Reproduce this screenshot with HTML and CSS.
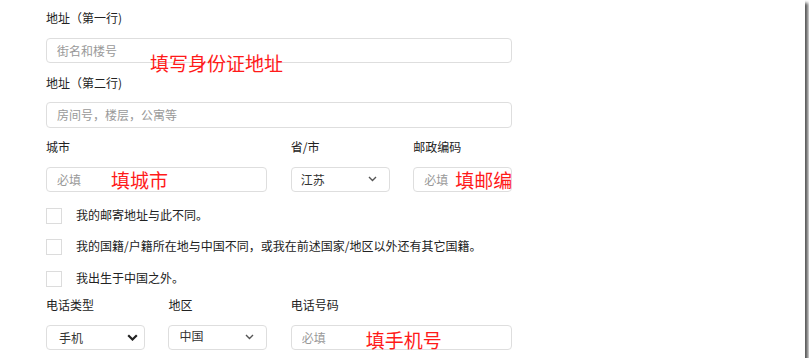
FILE: index.html
```html
<!DOCTYPE html>
<html lang="zh-CN">
<head>
    <meta charset="UTF-8">
    <meta name="viewport" content="width=device-width, initial-scale=1.0">
    <title>地址信息</title>
    <link rel="stylesheet" href="styles.css">
</head>
<body>
    <div class="frame">
        <form class="form">
            <div class="field">
                <label class="label">地址（第一行)</label>
                <div class="control">
                    <input class="input" type="text" placeholder="街名和楼号">
                    <span class="note note-addr">填写身份证地址</span>
                </div>
            </div>

            <div class="field">
                <label class="label">地址（第二行)</label>
                <div class="control">
                    <input class="input" type="text" placeholder="房间号，楼层，公寓等">
                </div>
            </div>

            <div class="field-grid">
                <div class="cell wide">
                    <label class="label">城市</label>
                    <div class="control">
                        <input class="input" type="text" placeholder="必填">
                        <span class="note note-city">填城市</span>
                    </div>
                </div>
                <div class="cell">
                    <label class="label">省/市</label>
                    <div class="select">
                        <span class="select-text">江苏</span>
                        <svg class="chevron" width="9" height="6" viewBox="0 0 9 6"><polyline points="1,1 4.5,4.5 8,1" fill="none" stroke="#555" stroke-width="1.4"/></svg>
                    </div>
                </div>
                <div class="cell">
                    <label class="label">邮政编码</label>
                    <div class="control">
                        <input class="input" type="text" placeholder="必填">
                        <span class="note note-zip">填邮编</span>
                    </div>
                </div>
            </div>

            <div class="checks">
                <div class="check-row">
                    <span class="checkbox"></span>
                    <span class="check-text">我的邮寄地址与此不同。</span>
                </div>
                <div class="check-row">
                    <span class="checkbox"></span>
                    <span class="check-text">我的国籍/户籍所在地与中国不同，或我在前述国家/地区以外还有其它国籍。</span>
                </div>
                <div class="check-row">
                    <span class="checkbox"></span>
                    <span class="check-text">我出生于中国之外。</span>
                </div>
            </div>

            <div class="field-grid phone-row">
                <div class="cell">
                    <label class="label">电话类型</label>
                    <div class="select">
                        <span class="select-text">手机</span>
                        <svg class="chevron chevron-bold" width="11" height="7" viewBox="0 0 11 7"><polyline points="1.2,1.2 5.5,5.5 9.8,1.2" fill="none" stroke="#222" stroke-width="2.2"/></svg>
                    </div>
                </div>
                <div class="cell">
                    <label class="label">地区</label>
                    <div class="select">
                        <span class="select-text select-text-up">中国</span>
                        <svg class="chevron" width="9" height="6" viewBox="0 0 9 6"><polyline points="1,1 4.5,4.5 8,1" fill="none" stroke="#555" stroke-width="1.4"/></svg>
                    </div>
                </div>
                <div class="cell wide">
                    <label class="label">电话号码</label>
                    <div class="control">
                        <input class="input" type="text" placeholder="必填">
                        <span class="note note-phone">填手机号</span>
                    </div>
                </div>
            </div>
        </form>
    </div>
</body>
</html>
```

FILE: styles.css
```css
body {
    margin: 0;
    background: #fff;
    font-family: "Noto Sans CJK SC", "Noto Sans", sans-serif;
    color: #222;
}

.frame {
    width: 805px;
    height: 358px;
    background: #fff;
    box-shadow: 3px 3px 3px rgba(0, 0, 0, 0.65);
    overflow: visible;
}

.form {
    width: 466px;
    padding: 8px 0 0 46px;
}

.field {
    margin-bottom: 9.5px;
}

.label {
    display: block;
    height: 20px;
    line-height: 20px;
    font-size: 12px;
    color: #222;
    margin-bottom: 9.5px;
    white-space: nowrap;
}

.control {
    position: relative;
}

.input {
    display: block;
    box-sizing: border-box;
    width: 100%;
    height: 25.5px;
    margin: 0;
    padding: 0 10px;
    border: 1px solid #dedede;
    border-radius: 4px;
    background: #fff;
    font-family: inherit;
    font-size: 12px;
    color: #333;
    outline: none;
}

.input::placeholder {
    color: #999;
}

.note {
    position: absolute;
    font-size: 19px;
    line-height: 20px;
    color: #ff1a1a;
    white-space: nowrap;
    pointer-events: none;
}

.note-addr { left: 104px; top: 15px; }
.note-city { left: 65px; top: 3px; }
.note-zip { left: 42px; top: 3px; }
.note-phone { left: 75px; top: 5px; }

.field-grid {
    display: grid;
    grid-template-columns: repeat(4, 1fr);
    column-gap: 23.5px;
}

.wide {
    grid-column: span 2;
}

.select {
    box-sizing: border-box;
    height: 25.5px;
    display: flex;
    align-items: center;
    justify-content: space-between;
    padding: 0 12px 0 9px;
    border: 1px solid #dedede;
    border-radius: 4px;
    background: #fff;
}

.select-text {
    font-size: 12px;
    color: #333;
}

.select-text-up {
    margin-top: -4px;
}

.phone-row .cell:first-child .select {
    padding-left: 12px;
    padding-right: 6px;
}

.phone-row .cell:nth-child(2) .select {
    padding-left: 10px;
}

.checks {
    margin-top: 8px;
}

.check-row {
    display: flex;
    align-items: center;
    height: 31.5px;
}

.checkbox {
    box-sizing: border-box;
    width: 16px;
    height: 16px;
    border: 1px solid #dcdcdc;
    background: #fff;
    flex-shrink: 0;
}

.check-text {
    margin-left: 14px;
    margin-top: -3px;
    font-size: 12px;
    color: #222;
    white-space: nowrap;
}

.phone-row {
    margin-top: 0.5px;
}
```
